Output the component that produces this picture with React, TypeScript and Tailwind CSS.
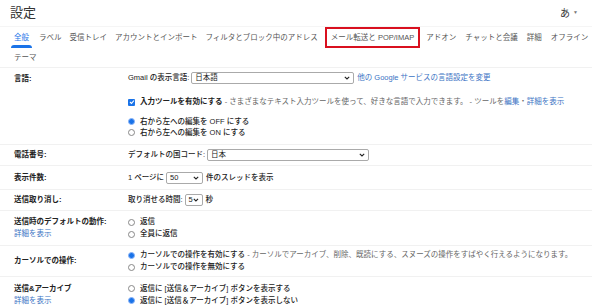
import React from "react";

const F = "font-['Liberation_Sans','Noto_Sans_CJK_JP',sans-serif]";

function Radio({ checked }: { checked?: boolean }) {
  return checked ? (
    <span className="inline-flex w-[7px] h-[7px] rounded-full border border-[#8ab4f8] bg-[#1a73e8] items-center justify-center mr-[5px] shrink-0">
      <span className="w-[3px] h-[3px] rounded-full bg-[#1a73e8]" />
    </span>
  ) : (
    <span className="inline-block w-[7px] h-[7px] rounded-full border border-[#888] bg-white mr-[5px] shrink-0" />
  );
}

function Select({ w, text }: { w: string; text: string }) {
  return (
    <span className={`inline-flex items-center justify-between h-[12px] border border-[#aaa] rounded-[2px] bg-white px-[3px] ${w}`}>
      <span className="text-[7.5px] text-[#222] font-normal">{text}</span>
      <svg width="6" height="4" viewBox="0 0 6 4"><path d="M0.8 0.8 L3 3 L5.2 0.8" stroke="#222" strokeWidth="1.1" fill="none" /></svg>
    </span>
  );
}

function Row({ label, sub, children, h }: { label: string; sub?: string; children: React.ReactNode; h: string }) {
  return (
    <div className={`flex border-b border-[#f1f1f1] ${h}`}>
      <div className="w-[128px] pl-[14px] shrink-0 flex flex-col justify-center">
        <div className="text-[7.5px] leading-[12px] font-bold text-[#222]">{label}</div>
        {sub && <div className="text-[7.5px] leading-[12px] text-[#3b73c4]">{sub}</div>}
      </div>
      <div className="flex-1 flex flex-col justify-center font-medium">{children}</div>
    </div>
  );
}

export default function App() {
  const tabs = ["ラベル", "受信トレイ", "アカウントとインポート", "フィルタとブロック中のアドレス"];
  const tabs2 = ["アドオン", "チャットと会議", "詳細", "オフライン"];
  return (
    <div className={`w-[600px] h-[307px] bg-white overflow-hidden ${F}`}>
      <div className="w-[592px]">
        <div className="h-[26px] flex items-center justify-between pl-[10px] pr-[14px]">
          <span className="text-[13px] text-[#333]">設定</span>
          <span className="text-[10px] text-[#333] flex items-center gap-[3px]">あ<span className="text-[5px] text-[#777]">▼</span></span>
        </div>
        <div className="h-[22px] flex items-center pl-[11px] text-[7.5px] text-[#555] border-t border-[#f5f5f5] whitespace-nowrap">
          <div className="relative px-[3px] text-[#1a73e8] h-full flex items-center mr-[7px] shrink-0">
            全般
            <span className="absolute left-0 right-0 bottom-0 h-[3px] rounded-t bg-[#1a73e8]" />
          </div>
          {tabs.map((t) => (
            <span key={t} className="mr-[8px] shrink-0">{t}</span>
          ))}
          <span className="mr-[6px] border-2 border-[#d9101f] px-[4px] py-[3px] -ml-[1px] shrink-0">メール転送と POP/IMAP</span>
          {tabs2.map((t) => (
            <span key={t} className="mr-[9px] shrink-0">{t}</span>
          ))}
        </div>
        <div className="h-[20px] flex items-center pl-[14px] text-[7.5px] text-[#555] border-b border-[#f1f1f1]">テーマ</div>

        <div className="flex border-b border-[#f1f1f1] h-[77px]">
          <div className="w-[128px] pl-[14px] shrink-0 pt-[5px]">
            <div className="text-[7.5px] leading-[12px] font-bold text-[#222]">言語:</div>
          </div>
          <div className="flex-1 flex flex-col text-[7.5px] text-[#222] font-medium">
            <div className="h-[12px] mt-[4px] flex items-center">
              <span className="mr-[2px]">Gmail の表示言語:</span>
              <Select w="w-[163px]" text="日本語" />
              <span className="ml-[3px] text-[#3b73c4] font-normal">他の Google サービスの言語設定を変更</span>
            </div>
            <div className="h-[12px] mt-[12px] flex items-center whitespace-nowrap">
              <span className="w-[7px] h-[7px] rounded-[1px] bg-[#1a73e8] mr-[5px] flex items-center justify-center">
                <svg width="6" height="6" viewBox="0 0 6 6"><path d="M1 3 L2.5 4.4 L5 1.5" stroke="white" strokeWidth="1.1" fill="none" /></svg>
              </span>
              <span className="font-bold">入力ツールを有効にする</span>
              <span className="text-[#666] font-normal">&nbsp;- さまざまなテキスト入力ツールを使って、好きな言語で入力できます。 - ツールを</span>
              <span className="text-[#3b73c4] font-normal">編集</span>
              <span className="text-[#666] font-normal">・</span>
              <span className="text-[#3b73c4] font-normal">詳細を表示</span>
            </div>
            <div className="h-[11px] mt-[8px] flex items-center"><Radio checked />右から左への編集を OFF にする</div>
            <div className="h-[11px] flex items-center"><Radio />右から左への編集を ON にする</div>
          </div>
        </div>

        <Row label="電話番号:" h="h-[21px]">
          <div className="flex items-center text-[7.5px] text-[#222]">
            <span className="mr-[2px]">デフォルトの国コード:</span>
            <Select w="w-[162px]" text="日本" />
          </div>
        </Row>
        <Row label="表示件数:" h="h-[24px]">
          <div className="flex items-center text-[7.5px] text-[#222]">
            <span className="mr-[2px]">1 ページに</span>
            <Select w="w-[37px]" text="50" />
            <span className="ml-[3px]">件のスレッドを表示</span>
          </div>
        </Row>
        <Row label="送信取り消し:" h="h-[21px]">
          <div className="flex items-center text-[7.5px] text-[#222]">
            <span className="mr-[2px]">取り消せる時間:</span>
            <Select w="w-[18px]" text="5" />
            <span className="ml-[3px]">秒</span>
          </div>
        </Row>
        <Row label="送信時のデフォルトの動作:" sub="詳細を表示" h="h-[35px]">
          <div className="text-[7.5px] text-[#222]">
            <div className="h-[12px] flex items-center"><Radio />返信</div>
            <div className="h-[12px] flex items-center"><Radio />全員に返信</div>
          </div>
        </Row>
        <Row label="カーソルでの操作:" h="h-[31px]">
          <div className="text-[7.5px] text-[#222] whitespace-nowrap">
            <div className="h-[12px] flex items-center"><Radio checked />カーソルでの操作を有効にする<span className="text-[#666] font-normal">&nbsp;- カーソルでアーカイブ、削除、既読にする、スヌーズの操作をすばやく行えるようになります。</span></div>
            <div className="h-[12px] flex items-center"><Radio />カーソルでの操作を無効にする</div>
          </div>
        </Row>
        <div className="flex h-[35px]">
          <div className="w-[128px] pl-[14px] shrink-0 flex flex-col justify-center">
            <div className="text-[7.5px] leading-[12px] font-bold text-[#222]">送信&amp;アーカイブ</div>
            <div className="text-[7.5px] leading-[12px] text-[#3b73c4]">詳細を表示</div>
          </div>
          <div className="flex-1 flex flex-col justify-center text-[7.5px] text-[#222] font-medium">
            <div className="h-[12px] flex items-center"><Radio />返信に [送信＆アーカイブ] ボタンを表示する</div>
            <div className="h-[12px] flex items-center"><Radio checked />返信に [送信＆アーカイブ] ボタンを表示しない</div>
          </div>
        </div>
      </div>
    </div>
  );
}
